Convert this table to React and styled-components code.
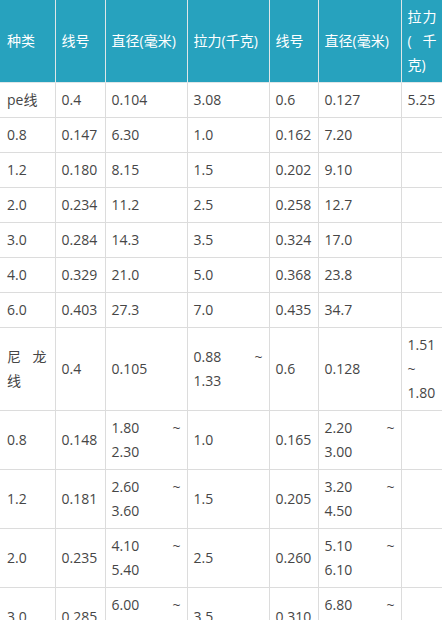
import React from "react";
import styled, { createGlobalStyle } from "styled-components";

const Global = createGlobalStyle`
  html, body { margin: 0; padding: 0; background: #fff; }
  body { font-family: "Open Sans", "Noto Sans CJK SC", sans-serif; }
`;

const Wrap = styled.div`
  width: 442px;
  overflow: hidden;
`;

const Table = styled.table`
  border-collapse: collapse;
  table-layout: fixed;
  width: 443px;
  font-size: 14px;
  line-height: 24px;
  color: #464646;
`;

const Th = styled.th`
  background: #27a2be;
  color: #fff;
  font-weight: normal;
  text-align: justify;
  vertical-align: middle;
  padding: 5px 6px;
  border: 1px solid #dfe6e8;
  border-top: none;
  &:first-child { border-left: none; padding-left: 7px; padding-right: 8px; }
`;

const Td = styled.td`
  text-align: justify;
  vertical-align: middle;
  padding: 5px 6px;
  border: 1px solid #dcdcdc;
  &:first-child { border-left: none; padding-left: 7px; padding-right: 8px; }
`;

const widths = [55, 50, 82, 82, 49, 83, 42];
const header = ["种类", "线号", "直径(毫米)", "拉力(千克)", "线号", "直径(毫米)", "拉力(千克)"];
const rows = [
  ["pe线", "0.4", "0.104", "3.08", "0.6", "0.127", "5.25"],
  ["0.8", "0.147", "6.30", "1.0", "0.162", "7.20", ""],
  ["1.2", "0.180", "8.15", "1.5", "0.202", "9.10", ""],
  ["2.0", "0.234", "11.2", "2.5", "0.258", "12.7", ""],
  ["3.0", "0.284", "14.3", "3.5", "0.324", "17.0", ""],
  ["4.0", "0.329", "21.0", "5.0", "0.368", "23.8", ""],
  ["6.0", "0.403", "27.3", "7.0", "0.435", "34.7", ""],
  ["尼龙线", "0.4", "0.105", "0.88 ~ 1.33", "0.6", "0.128", "1.51 ~ 1.80"],
  ["0.8", "0.148", "1.80 ~ 2.30", "1.0", "0.165", "2.20 ~ 3.00", ""],
  ["1.2", "0.181", "2.60 ~ 3.60", "1.5", "0.205", "3.20 ~ 4.50", ""],
  ["2.0", "0.235", "4.10 ~ 5.40", "2.5", "0.260", "5.10 ~ 6.10", ""],
  ["3.0", "0.285", "6.00 ~ 7.40", "3.5", "0.310", "6.80 ~ 8.20", ""],
  ["4.0", "0.330", "7.30 ~ 9.20", "5.0", "0.370", "9.00 ~ 11.0", ""],
];

export default function App() {
  return (
    <Wrap>
      <Global />
      <Table>
        <colgroup>
          {widths.map((w, i) => (
            <col key={i} style={{ width: w }} />
          ))}
        </colgroup>
        <thead>
          <tr>
            {header.map((h, i) => (
              <Th key={i}>{h}</Th>
            ))}
          </tr>
        </thead>
        <tbody>
          {rows.map((r, i) => (
            <tr key={i}>
              {r.map((c, j) => (
                <Td key={j}>{c}</Td>
              ))}
            </tr>
          ))}
        </tbody>
      </Table>
    </Wrap>
  );
}
